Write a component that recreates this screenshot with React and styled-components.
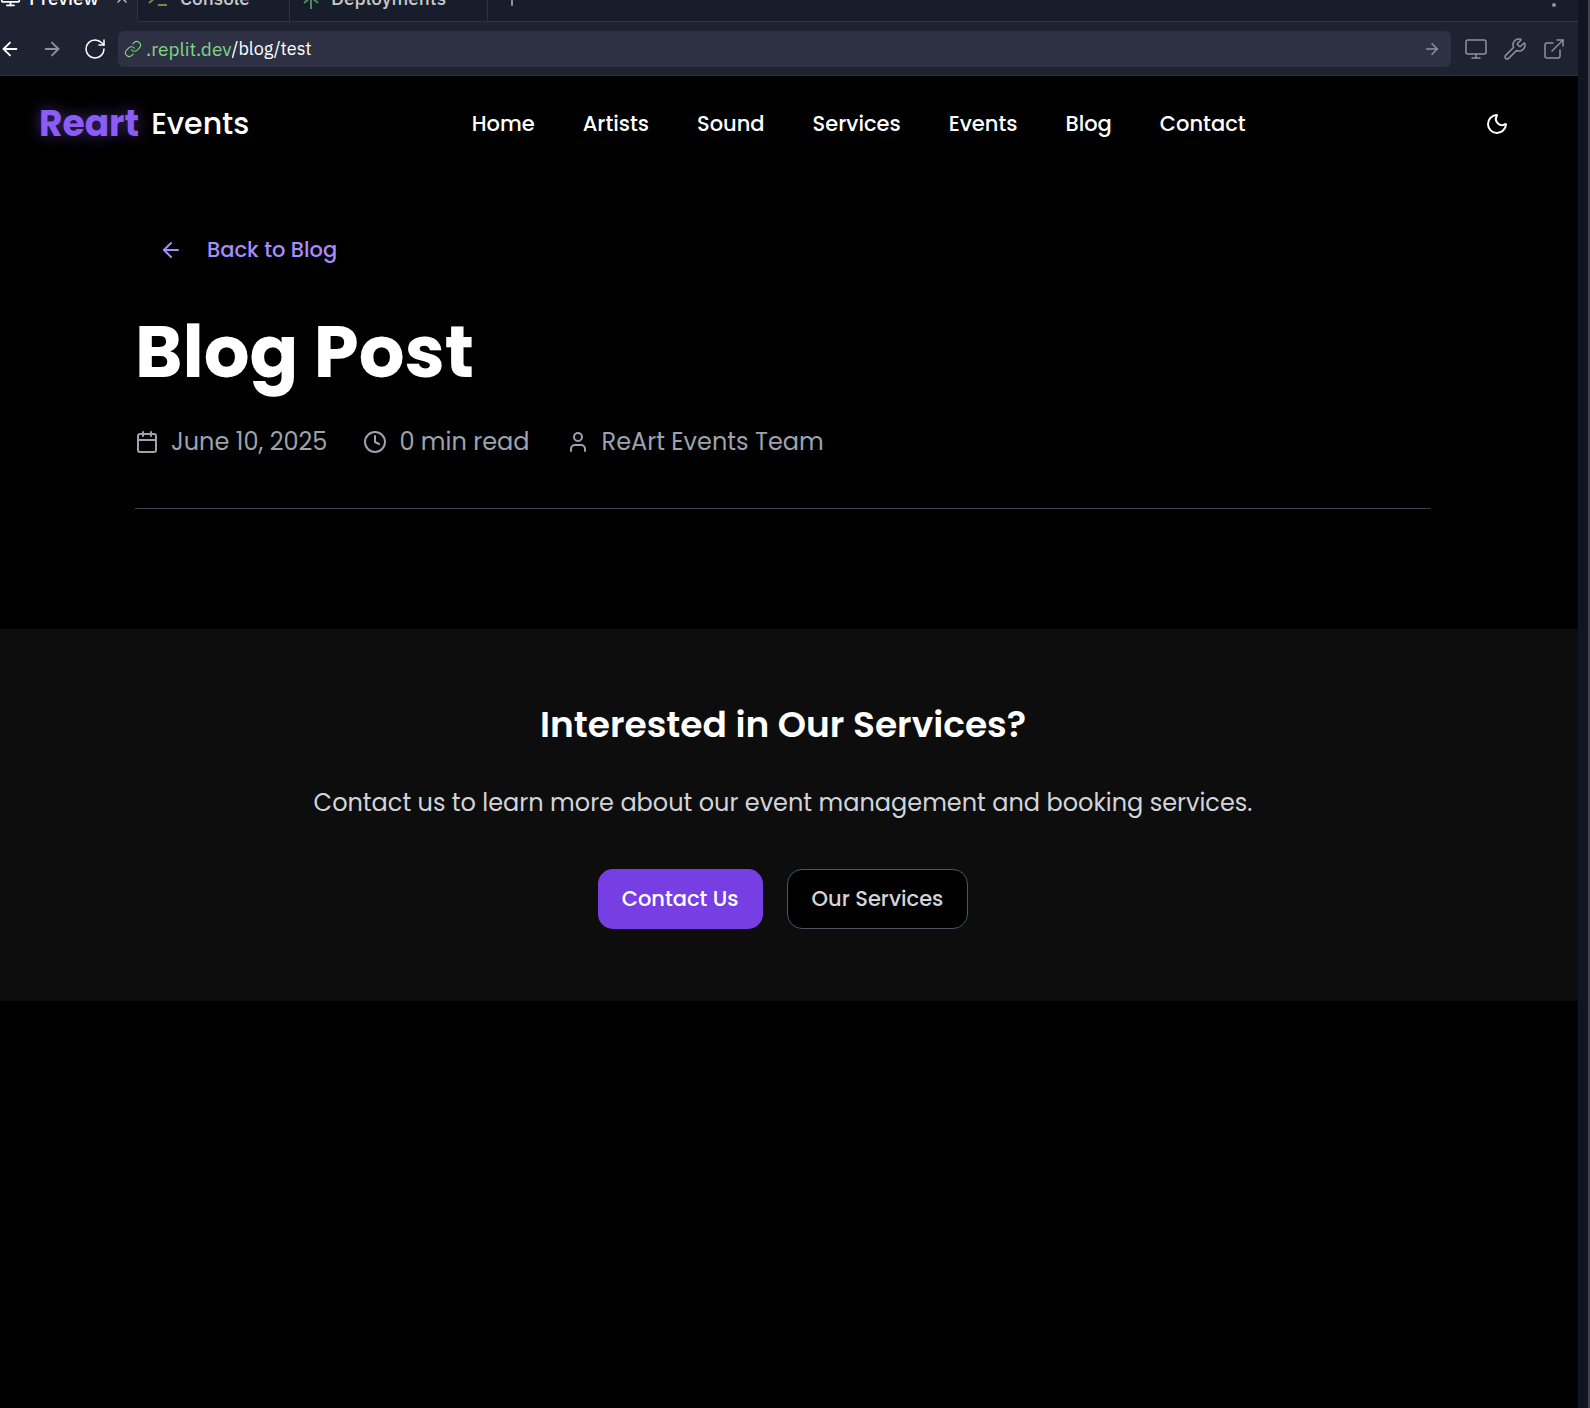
import React, { useState } from "react";
import styled, { createGlobalStyle } from "styled-components";
import {
  ArrowLeft,
  ArrowRight,
  Calendar,
  Clock,
  ExternalLink,
  Link,
  Monitor,
  Moon,
  MoreVertical,
  Plus,
  RotateCw,
  User,
  Wrench,
  X,
} from "lucide-react";

const GlobalStyle = createGlobalStyle`
  *, *::before, *::after { box-sizing: border-box; }
  html, body { margin: 0; background: #000; }
  body { font-family: Poppins, Inter, "Open Sans", sans-serif; color: #fff; }
  button, input { font: inherit; color: inherit; }
  a { color: inherit; text-decoration: none; }
  svg { display: block; flex: none; }
`;

const Workspace = styled.div`
  display: flex;
  min-height: 100vh;
  background: #0f1523;
  border-right: 2px solid #44454f;
  padding-right: 10px;
`;

const Pane = styled.div`
  flex: 1;
  min-width: 0;
  display: flex;
  flex-direction: column;
  background: #000;
`;

const TabBar = styled.div`
  height: 22px;
  overflow: hidden;
  display: flex;
  align-items: flex-end;
  background: #171d2a;
  font-family: "IBM Plex Sans", Inter, sans-serif;
  font-size: 19px;
  font-weight: 500;
`;

const Tab = styled.button`
  height: 48px;
  flex: none;
  width: ${(p) => p.$width}px;
  display: flex;
  align-items: center;
  gap: ${(p) => (p.$active ? 8 : 12)}px;
  padding: 0 7px 0 ${(p) => p.$inset}px;
  border: 0;
  border-right: 1px solid #2f3443;
  border-bottom: 1px solid ${(p) => (p.$active ? "#1e2332" : "#2f3443")};
  background: ${(p) => (p.$active ? "#1e2332" : "transparent")};
  color: ${(p) => (p.$active ? "#fff" : "#c5c7cc")};
  overflow: hidden;

  & > svg:last-child:not(:first-child) {
    margin-left: auto;
    color: #c5c7cc;
  }
`;

const TabFill = styled.div`
  flex: 1;
  height: 48px;
  display: flex;
  align-items: center;
  justify-content: space-between;
  padding: 0 12px;
  border-bottom: 1px solid #2f3443;
  color: #a3a5ad;
`;

const BarButton = styled.button`
  display: flex;
  align-items: center;
  justify-content: center;
  padding: 0;
  border: 0;
  background: none;
  color: ${(p) => (p.$bright ? "#fff" : "#8f929b")};
`;

const Toolbar = styled.div`
  display: flex;
  align-items: center;
  height: 54px;
  padding-right: 12px;
  background: #1e2332;
  border-bottom: 1px solid #2f3443;
`;

const NavTools = styled.div`
  display: flex;
  gap: 20px;
  margin: 0 11px 0 -1px;
`;

const SideTools = styled.div`
  display: flex;
  gap: 15px;
  margin-left: 13px;
`;

const AddressBar = styled.div`
  flex: 1;
  min-width: 0;
  height: 36px;
  display: flex;
  align-items: center;
  padding: 0 10px 0 6px;
  border-radius: 6px;
  background: #2d3143;
  font-family: "IBM Plex Sans", Roboto, sans-serif;
  line-height: 24px;
`;

const Domain = styled.label`
  display: flex;
  align-items: center;
  gap: 4px;
  color: #82d583;
  font-size: 19px;
`;

const PathInput = styled.input`
  flex: 1;
  min-width: 0;
  padding: 0;
  border: 0;
  outline: 0;
  background: none;
  color: #fff;
  font-size: 18px;
`;

const SiteHeader = styled.header`
  display: flex;
  align-items: center;
  justify-content: space-between;
  min-height: 96px;
  padding: 0 52px 0 39px;
`;

const Brand = styled.a`
  display: flex;
  align-items: center;
  gap: 12px;
  font-size: 30px;
  line-height: 48px;
  font-weight: 500;
`;

const BrandMark = styled.strong`
  font-size: 36px;
  font-weight: 700;
  color: #8b5cf6;
  text-shadow: 0 0 15px rgba(139, 92, 246, 0.5);
`;

const SiteNav = styled.nav`
  display: flex;
  gap: 48px;
  font-size: 21px;
  line-height: 30px;
  font-weight: 500;
`;

const ThemeButton = styled.button`
  display: flex;
  align-items: center;
  justify-content: center;
  width: 58px;
  height: 58px;
  padding: 0;
  border: 0;
  background: none;
`;

const Article = styled.main`
  width: 100%;
  max-width: 1356px;
  margin: 0 auto;
  padding: 48px 36px 120px 24px;
`;

const BackLink = styled.a`
  display: inline-flex;
  align-items: center;
  gap: 24px;
  height: 60px;
  padding: 0 24px;
  color: #a78bfa;
  font-size: 21px;
  line-height: 30px;
  font-weight: 500;
`;

const Title = styled.h1`
  margin: 24px 0;
  font-size: 72px;
  line-height: 96px;
  font-weight: 700;
`;

const Meta = styled.div`
  display: flex;
  gap: 36px;
  padding-bottom: 48px;
  border-bottom: 1px solid #374151;
  color: #9ca3af;
  font-size: 24px;
  line-height: 36px;
`;

const MetaItem = styled.span`
  display: flex;
  align-items: center;
  gap: 12px;
`;

const CallToAction = styled.section`
  padding: 72px 36px 72px 24px;
  background: #0d0d0d;
  text-align: center;
`;

const CtaTitle = styled.h2`
  margin: 0 0 36px;
  font-size: 36px;
  line-height: 48px;
  font-weight: 600;
`;

const CtaText = styled.p`
  margin: 0 0 48px;
  color: #d1d5db;
  font-size: 24px;
  line-height: 36px;
`;

const Actions = styled.div`
  display: flex;
  justify-content: center;
  gap: 24px;
`;

const ActionButton = styled.button`
  height: 60px;
  padding: 0 24px;
  border: ${(p) => (p.$primary ? "0" : "1px solid #4b5563")};
  border-radius: 15px;
  background: ${(p) => (p.$primary ? "#773ee4" : "#000")};
  color: ${(p) => (p.$primary ? "#fff" : "#d1d5db")};
  font-size: 21px;
  line-height: 30px;
  font-weight: 500;
`;

function PromptIcon() {
  return (
    <svg width="20" height="20" viewBox="0 0 20 20" fill="none" stroke="#8b7c50" strokeWidth="2">
      <path d="M1 3l7 6-7 6M10 17h9" />
    </svg>
  );
}

function DeployIcon() {
  return (
    <svg width="16" height="22" viewBox="0 0 16 22" fill="none" stroke="#4f8a5c" strokeWidth="2">
      <path d="M8 22V3M2 8l6-6 6 6M1 16l7-6 7 6" />
    </svg>
  );
}

const links = ["Home", "Artists", "Sound", "Services", "Events", "Blog", "Contact"];

export default function App() {
  const [path, setPath] = useState("/blog/test");
  return (
    <>
      <GlobalStyle />
      <Workspace>
        <Pane>
          <TabBar>
            <Tab $active $width={138} $inset={0}>
              <Monitor size={21} strokeWidth={2} />
              Preview
              <X size={16} strokeWidth={2} />
            </Tab>
            <Tab $width={152} $inset={10}>
              <PromptIcon />
              <span>Console</span>
            </Tab>
            <Tab $width={198} $inset={13}>
              <DeployIcon />
              <span>Deployments</span>
            </Tab>
            <TabFill>
              <BarButton aria-label="New tab"><Plus size={24} strokeWidth={2} /></BarButton>
              <BarButton aria-label="More"><MoreVertical size={24} /></BarButton>
            </TabFill>
          </TabBar>
          <Toolbar>
            <NavTools>
              <BarButton $bright aria-label="Back"><ArrowLeft size={22} strokeWidth={2} /></BarButton>
              <BarButton aria-label="Forward"><ArrowRight size={22} strokeWidth={2} /></BarButton>
              <BarButton $bright aria-label="Reload"><RotateCw size={24} strokeWidth={1.5} /></BarButton>
            </NavTools>
            <AddressBar>
              <Domain htmlFor="path">
                <Link size={18} strokeWidth={1.5} />
                .replit.dev
              </Domain>
              <PathInput id="path" value={path} onChange={(e) => setPath(e.target.value)} />
              <BarButton aria-label="Go"><ArrowRight size={18} strokeWidth={2} /></BarButton>
            </AddressBar>
            <SideTools>
              <BarButton aria-label="Devices"><Monitor size={24} strokeWidth={1.5} /></BarButton>
              <BarButton aria-label="Tools"><Wrench size={24} strokeWidth={1.5} /></BarButton>
              <BarButton aria-label="Open in new tab"><ExternalLink size={24} strokeWidth={1.5} /></BarButton>
            </SideTools>
          </Toolbar>
          <SiteHeader>
            <Brand href="#">
              <BrandMark>Reart</BrandMark>
              <span>Events</span>
            </Brand>
            <SiteNav>
              {links.map((l) => (
                <a key={l} href={"#" + l.toLowerCase()}>{l}</a>
              ))}
            </SiteNav>
            <ThemeButton aria-label="Toggle theme"><Moon size={24} strokeWidth={2} /></ThemeButton>
          </SiteHeader>
          <Article>
            <BackLink href="#blog"><ArrowLeft size={24} strokeWidth={2} />Back to Blog</BackLink>
            <Title>Blog Post</Title>
            <Meta>
              <MetaItem><Calendar size={24} strokeWidth={2} />June 10, 2025</MetaItem>
              <MetaItem><Clock size={24} strokeWidth={2} />0 min read</MetaItem>
              <MetaItem><User size={24} strokeWidth={2} />ReArt Events Team</MetaItem>
            </Meta>
          </Article>
          <CallToAction>
            <CtaTitle>Interested in Our Services?</CtaTitle>
            <CtaText>Contact us to learn more about our event management and booking services.</CtaText>
            <Actions>
              <ActionButton $primary>Contact Us</ActionButton>
              <ActionButton>Our Services</ActionButton>
            </Actions>
          </CallToAction>
        </Pane>
      </Workspace>
    </>
  );
}
